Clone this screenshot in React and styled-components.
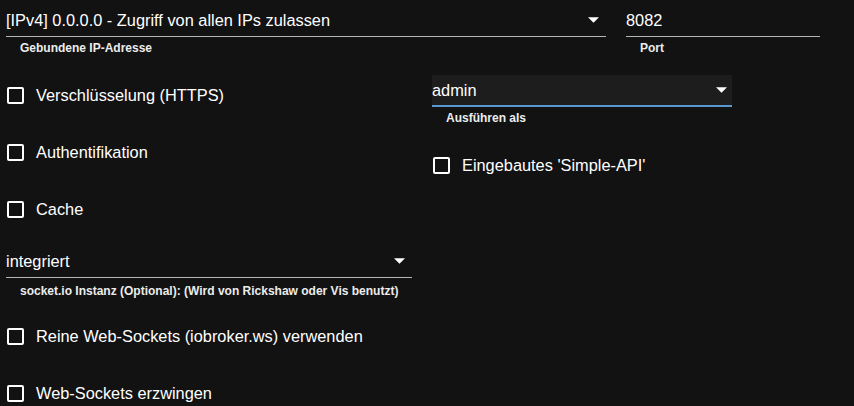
import React from "react";
import styled, { createGlobalStyle } from "styled-components";

const GlobalStyle = createGlobalStyle`
  html, body {
    margin: 0;
    padding: 0;
    background: #121212;
  }
  body {
    font-family: "Liberation Sans", Arial, sans-serif;
    color: #fff;
    overflow: hidden;
  }
`;

// ----------- Layout -----------
const Page = styled.div`
  padding-left: 6px;
  width: 848px;
  height: 406px;
  box-sizing: border-box;
`;

const TopRow = styled.div`
  display: flex;
  gap: 20px;
`;

const Columns = styled.div`
  display: grid;
  grid-template-columns: 406px 300px;
  column-gap: 20px;
  margin-top: 12px;
`;

const Column = styled.div`
  display: flex;
  flex-direction: column;
`;

// ----------- Fields -----------
const Field = styled.div`
  display: flex;
  flex-direction: column;
  width: ${(p) => p.$width}px;
  margin-top: ${(p) => p.$top || 0}px;
`;

const SelectBox = styled.div`
  display: flex;
  align-items: center;
  justify-content: space-between;
  box-sizing: border-box;
  height: ${(p) => (p.$filled ? 32 : p.$height || 37)}px;
  padding: ${(p) => (p.$filled ? "0 5px 0 0" : `${p.$padTop || 4}px 7px 0 0`)};
  font-size: 16.35px;
  line-height: 20px;
  background: ${(p) => (p.$filled ? "#1d1d1d" : "transparent")};
  border-bottom: ${(p) => (p.$filled ? "2px solid #5a96cf" : "1px solid #b5b5b5")};
`;

const Value = styled.span`
  white-space: nowrap;
`;

const Helper = styled.div`
  margin-top: ${(p) => p.$top || 4}px;
  padding-left: 14px;
  font-size: 12px;
  line-height: 14px;
  font-weight: 700;
  color: #ececec;
  white-space: nowrap;
`;

// ----------- Checkbox -----------
const CheckRow = styled.label`
  display: flex;
  align-items: center;
  height: 57px;
  margin-top: ${(p) => p.$top || 0}px;
  font-size: 16.35px;
  color: #fff;
`;

const Box = styled.span`
  width: 17px;
  height: 17px;
  box-sizing: border-box;
  border: 2px solid #fff;
  border-radius: 2px;
  margin-left: 1px;
  margin-right: 12px;
  flex-shrink: 0;
`;

const Arrow = () => (
  <svg width="11" height="6" viewBox="0 0 10 5">
    <path d="M0 0l5 5 5-5z" fill="#fff" />
  </svg>
);

function Select({ value, helper, width, filled, padTop, height, top, helperTop }) {
  return (
    <Field $width={width} $top={top}>
      <SelectBox $filled={filled} $padTop={padTop} $height={height}>
        <Value>{value}</Value>
        <Arrow />
      </SelectBox>
      {helper && <Helper $top={helperTop}>{helper}</Helper>}
    </Field>
  );
}

function Check({ label, top }) {
  return (
    <CheckRow $top={top}>
      <Box />
      {label}
    </CheckRow>
  );
}

export default function App() {
  return (
    <>
      <GlobalStyle />
      <Page>
        <TopRow>
          <Select
            width={600}
            value="[IPv4] 0.0.0.0 - Zugriff von allen IPs zulassen"
            helper="Gebundene IP-Adresse"
          />
          <Field $width={194}>
            <SelectBox>
              <Value>8082</Value>
            </SelectBox>
            <Helper>Port</Helper>
          </Field>
        </TopRow>

        <Columns>
          <Column>
            <Check label="Verschlüsselung (HTTPS)" />
            <Check label="Authentifikation" />
            <Check label="Cache" />
            <Select
              width={406}
              height={40}
              padTop={7}
              value="integriert"
              helper="socket.io Instanz (Optional): (Wird von Rickshaw oder Vis benutzt)"
              helperTop={6}
            />
            <Check label="Reine Web-Sockets (iobroker.ws) verwenden" top={10} />
            <Check label="Web-Sockets erzwingen" />
          </Column>

          <Column>
            <Select width={300} top={8} filled value="admin" helper="Ausführen als" />
            <Check label="Eingebautes 'Simple-API'" top={12} />
          </Column>
        </Columns>
      </Page>
    </>
  );
}
